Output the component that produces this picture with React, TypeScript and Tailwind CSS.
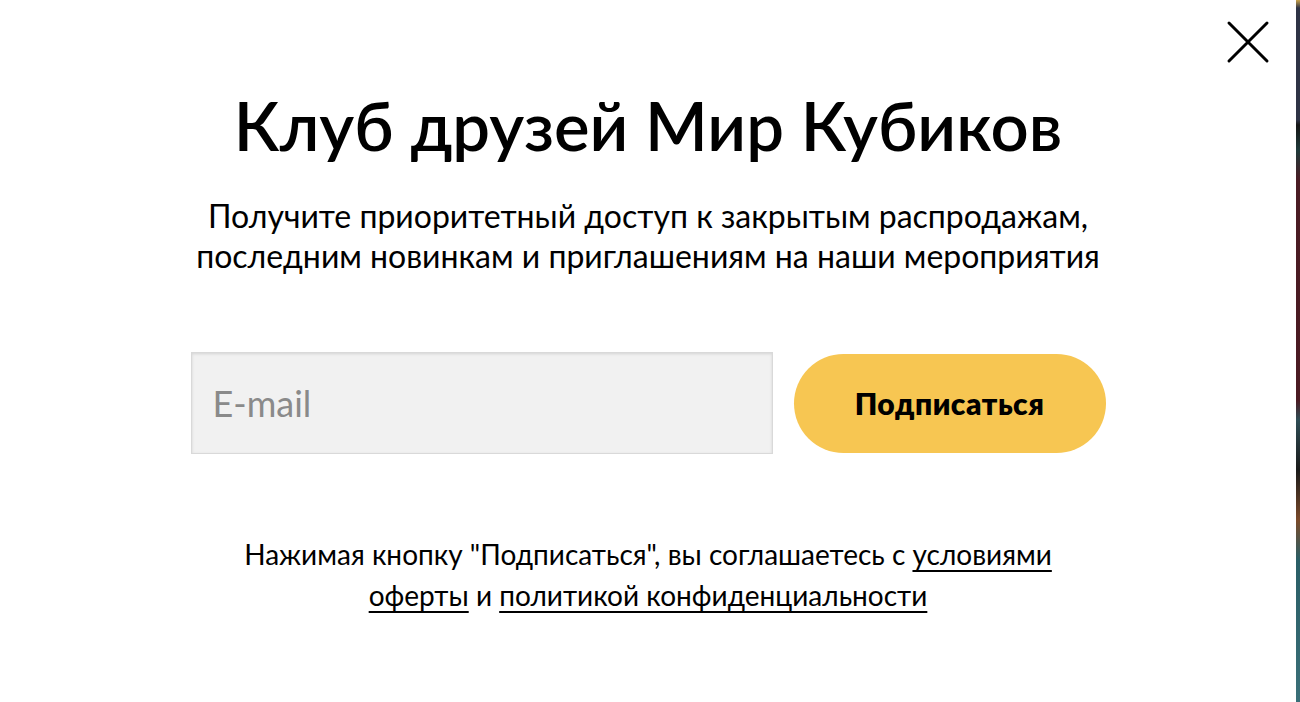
function CloseIcon() {
  return (
    <svg width="44" height="44" viewBox="0 0 44 44" fill="none">
      <path d="M3 3 L41 41 M41 3 L3 41" stroke="#000" strokeWidth="3" strokeLinecap="round" />
    </svg>
  );
}

export default function App() {
  return (
    <div className="flex h-[702px] w-[1300px] overflow-hidden bg-white font-['Lato','Liberation_Sans',sans-serif] text-black">
      <div className="relative flex flex-1 flex-col items-center rounded-r-[8px] bg-white">
        <button className="absolute right-[26px] top-[20px]" aria-label="close">
          <CloseIcon />
        </button>

        <h1 className="mt-[85px] text-[67px] font-semibold leading-[80px]">
          Клуб друзей Мир Кубиков
        </h1>

        <p className="mt-[31px] text-center text-[32px] leading-[40px]">
          Получите приоритетный доступ к закрытым распродажам,
          <br />
          последним новинкам и приглашениям на наши мероприятия
        </p>

        <div className="mt-[76px] flex items-center gap-[21px]">
          <input
            type="text"
            placeholder="E-mail"
            className="h-[102px] w-[582px] border border-[#d9d9d9] bg-[#f1f1f1] px-[21px] text-[36px] shadow-[inset_0_1px_3px_rgba(0,0,0,0.12)] outline-none placeholder:text-[#8a8a8a]"
          />
          <button className="h-[99px] w-[312px] rounded-full bg-[#f7c652] text-[30px] font-extrabold tracking-[0.5px]">
            Подписаться
          </button>
        </div>

        <p className="mt-[80px] text-center text-[28px] leading-[41px]">
          Нажимая кнопку "Подписаться", вы соглашаетесь с{" "}
          <a href="#" className="underline underline-offset-[5px] [text-decoration-skip-ink:none]">
            условиями
            <br />
            оферты
          </a>{" "}
          и{" "}
          <a href="#" className="underline underline-offset-[5px] [text-decoration-skip-ink:none]">
            политикой конфиденциальности
          </a>
        </p>
      </div>
      <div className="w-[4px] bg-[linear-gradient(to_bottom,#c9a24a_0px,#2e3345_8px,#2e3345_120px,#151515_125px,#1f3a3a_150px,#4a1c24_180px,#4b1a22_400px,#2f4d55_420px,#1a1a1a_470px,#7a4a2a_520px,#2a5e66_560px,#3a6f78_700px)]" />
    </div>
  );
}
